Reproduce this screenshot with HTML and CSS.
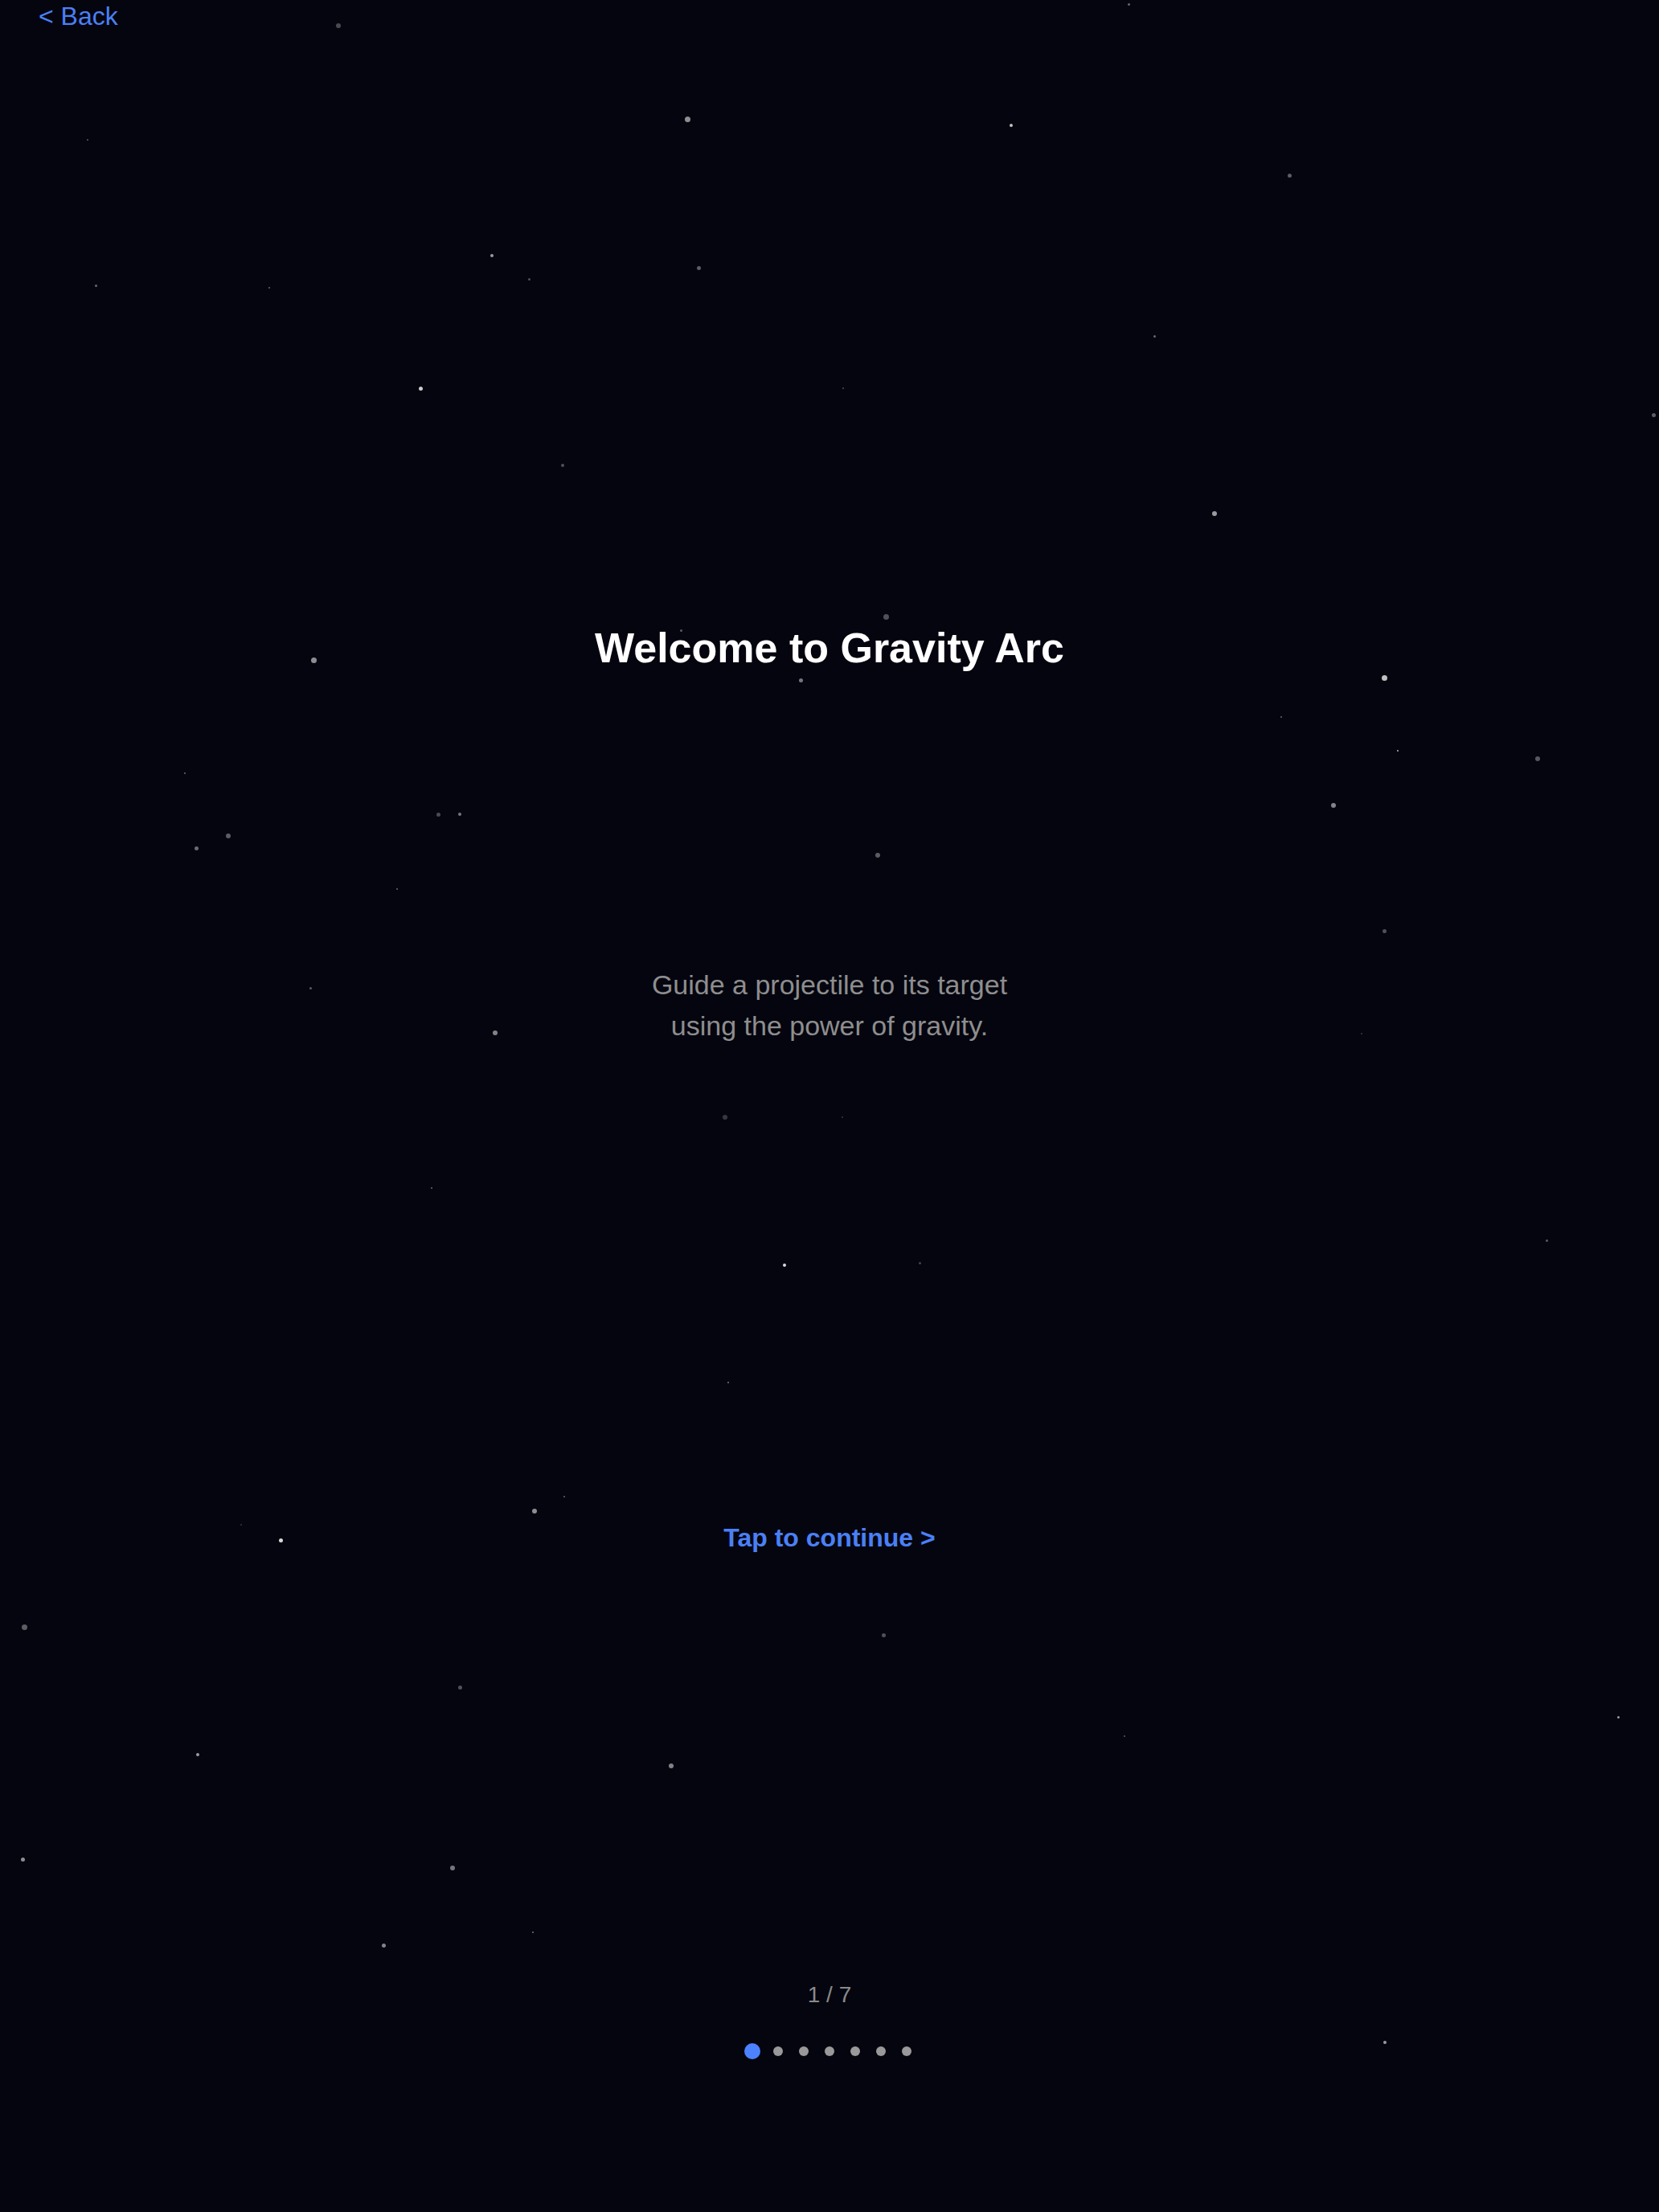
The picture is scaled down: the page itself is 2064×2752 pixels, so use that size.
FILE: index.html
```html
<!DOCTYPE html>
<html lang="en">
<head>
    <meta charset="UTF-8">
    <meta name="viewport" content="width=device-width, initial-scale=1.0">
    <title>Gravity Arc - Tutorial</title>
    <link rel="stylesheet" href="styles.css">
</head>
<body>
    <div class="screen">
        <div id="starfield" class="starfield"></div>

        <header class="top-bar">
            <a href="#" class="back-link">&lt; Back</a>
        </header>

        <main class="slide">
            <h1 class="slide-title">Welcome to Gravity Arc</h1>
            <p class="slide-text">Guide a projectile to its target<br>using the power of gravity.</p>
            <button class="continue-btn">Tap to continue &gt;</button>
        </main>

        <footer class="pager">
            <div class="page-count">1 / 7</div>
            <div class="dots">
                <span class="dot active"></span>
                <span class="dot"></span>
                <span class="dot"></span>
                <span class="dot"></span>
                <span class="dot"></span>
                <span class="dot"></span>
                <span class="dot"></span>
            </div>
        </footer>
    </div>

    <script>
        // x, y, size, opacity
        const stars = [
            [421, 32, 6, .28], [1404, 5, 3, .4], [855, 148, 7, .55], [1258, 156, 4, .75],
            [109, 174, 2, .35], [1604, 218, 5, .35], [612, 318, 4, .6], [119, 355, 3, .4],
            [658, 347, 3, .3], [335, 358, 2, .4], [869, 333, 5, .35], [1436, 418, 3, .4],
            [523, 483, 5, .8], [1049, 483, 2, .3], [2057, 516, 5, .35], [700, 579, 4, .3],
            [1511, 639, 6, .6], [1102, 767, 7, .3], [847, 784, 3, .35], [390, 821, 7, .55],
            [996, 846, 5, .45], [1722, 843, 7, .75], [1594, 892, 2, .4], [1739, 934, 2, .7],
            [1913, 944, 6, .33], [230, 962, 2, .4], [1659, 1002, 6, .5], [545, 1013, 5, .28],
            [572, 1013, 4, .45], [284, 1040, 6, .35], [244, 1055, 5, .4], [1092, 1064, 6, .35],
            [494, 1106, 2, .4], [1722, 1158, 5, .3], [386, 1229, 3, .35], [616, 1285, 6, .5],
            [1694, 1286, 2, .2], [902, 1390, 6, .2], [1048, 1390, 2, .2], [537, 1478, 2, .4],
            [1924, 1543, 3, .35], [976, 1574, 4, .85], [1144, 1571, 3, .25], [906, 1720, 2, .45],
            [702, 1862, 2, .4], [665, 1880, 6, .55], [300, 1897, 2, .2], [349, 1916, 5, .85],
            [30, 2024, 7, .35], [1099, 2034, 5, .3], [572, 2099, 5, .3], [2013, 2136, 3, .6],
            [1399, 2160, 2, .35], [246, 2183, 4, .6], [835, 2197, 6, .5], [28, 2313, 5, .55],
            [563, 2324, 6, .45], [663, 2404, 2, .45], [477, 2420, 5, .5], [1723, 2541, 4, .6]
        ];

        const field = document.getElementById('starfield');
        stars.forEach(([x, y, size, alpha]) => {
            const star = document.createElement('span');
            star.className = 'star';
            star.style.left = `${x - size / 2}px`;
            star.style.top = `${y - size / 2}px`;
            star.style.width = `${size}px`;
            star.style.height = `${size}px`;
            star.style.opacity = alpha;
            field.appendChild(star);
        });
    </script>
</body>
</html>
```

FILE: styles.css
```css
body {
    margin: 0;
    background-color: #05050f;
    font-family: "Liberation Sans", Arial, sans-serif;
    color: #fff;
}
.screen {
    position: relative;
    min-height: 2752px;
    overflow: hidden;
    display: flex;
    flex-direction: column;
    align-items: center;
}
.starfield {
    position: absolute;
    inset: 0;
    pointer-events: none;
}
.star {
    position: absolute;
    border-radius: 50%;
    background-color: #fff;
}
.top-bar {
    align-self: stretch;
    padding: 0 48px;
    position: relative;
}
.back-link {
    color: #4a80f5;
    text-decoration: none;
    font-size: 32px;
    line-height: 40px;
}
.slide {
    position: relative;
    display: flex;
    flex-direction: column;
    align-items: center;
    text-align: center;
}
.slide-title {
    margin: 736px 0 0;
    font-size: 52px;
    line-height: 60px;
    font-weight: bold;
    color: #fff;
}
.slide-text {
    margin: 364px 0 0;
    font-size: 34px;
    line-height: 51px;
    color: #8e8e8e;
}
.continue-btn {
    margin-top: 591px;
    padding: 0;
    border: none;
    background: none;
    font-family: inherit;
    font-size: 32px;
    line-height: 40px;
    font-weight: bold;
    color: #4a80f5;
    cursor: pointer;
}
.pager {
    position: relative;
    margin-top: 533px;
    display: flex;
    flex-direction: column;
    align-items: center;
}
.page-count {
    font-size: 28px;
    line-height: 32px;
    color: #8a8a8a;
}
.dots {
    margin-top: 44px;
    height: 20px;
    display: flex;
    align-items: center;
    gap: 20px;
}
.dot {
    width: 12px;
    height: 12px;
    border-radius: 50%;
    background-color: #999;
}
.dot.active {
    background-color: #4c82ff;
    transform: scale(1.667);
}
```
